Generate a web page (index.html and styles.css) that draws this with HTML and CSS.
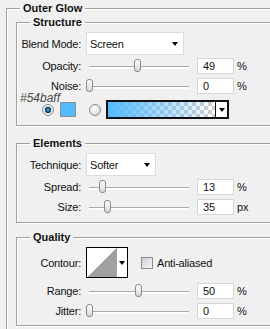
FILE: index.html
```html
<!DOCTYPE html>
<html lang="en">
<head>
    <meta charset="UTF-8">
    <meta name="viewport" content="width=device-width, initial-scale=1.0">
    <title>Outer Glow</title>
    <link rel="stylesheet" href="styles.css">
</head>
<body>
    <fieldset class="panel">
        <legend>Outer Glow</legend>

        <fieldset class="group structure">
            <legend>Structure</legend>
            <div class="row tall">
                <span class="label">Blend Mode:</span>
                <div class="select blend"><span>Screen</span><i class="arrow"></i></div>
            </div>
            <div class="row first">
                <span class="label">Opacity:</span>
                <div class="slider"><span class="thumb" style="left: 48px"></span></div>
                <span class="field">49</span>
                <span class="unit">%</span>
            </div>
            <div class="row">
                <span class="label">Noise:</span>
                <div class="slider"><span class="thumb" style="left: 0px"></span></div>
                <span class="field">0</span>
                <span class="unit">%</span>
            </div>
            <div class="hex">#54baff</div>
            <div class="colors">
                <span class="radio on"></span>
                <span class="swatch"></span>
                <span class="radio"></span>
                <div class="gradient">
                    <span class="ramp"></span>
                    <span class="drop"><i class="arrow"></i></span>
                </div>
            </div>
        </fieldset>

        <fieldset class="group elements">
            <legend>Elements</legend>
            <div class="row tall">
                <span class="label">Technique:</span>
                <div class="select technique"><span>Softer</span><i class="arrow"></i></div>
            </div>
            <div class="row first">
                <span class="label">Spread:</span>
                <div class="slider"><span class="thumb" style="left: 13px"></span></div>
                <span class="field">13</span>
                <span class="unit">%</span>
            </div>
            <div class="row">
                <span class="label">Size:</span>
                <div class="slider"><span class="thumb" style="left: 18px"></span></div>
                <span class="field">35</span>
                <span class="unit">px</span>
            </div>
        </fieldset>

        <fieldset class="group quality">
            <legend>Quality</legend>
            <div class="row contour-row">
                <span class="label">Contour:</span>
                <div class="contour">
                    <span class="curve"></span>
                    <span class="contour-drop"><i class="arrow"></i></span>
                </div>
                <span class="check"></span>
                <span>Anti-aliased</span>
            </div>
            <div class="row range">
                <span class="label">Range:</span>
                <div class="slider"><span class="thumb" style="left: 49px"></span></div>
                <span class="field">50</span>
                <span class="unit">%</span>
            </div>
            <div class="row">
                <span class="label">Jitter:</span>
                <div class="slider"><span class="thumb" style="left: 0px"></span></div>
                <span class="field">0</span>
                <span class="unit">%</span>
            </div>
        </fieldset>
    </fieldset>
</body>
</html>
```

FILE: styles.css
```css
* { margin: 0; padding: 0; box-sizing: border-box; }
html, body { overflow: hidden; }
body { font-family: "Liberation Sans", Arial, sans-serif; font-size: 11px; letter-spacing: -0.2px; color: #111; background: #f0f0f0; padding-top: 2px; }

fieldset { border: 1px solid #a0a0a0; box-shadow: inset 1px 1px 0 #fff, 0 1px 0 #fff; min-width: 0; }
legend { font-weight: bold; line-height: 13px; padding: 0 3px; letter-spacing: 0; }

.panel { width: 300px; margin-left: 6px; padding: 1px 0 12px 9px; }
.panel > legend { margin-left: 4px; }
.group legend { margin-left: 13px; }
.group { padding: 3px 0 6px; }
.elements { margin-top: 11px; padding-bottom: 7px; }
.quality { margin-top: 8px; }

.row { display: flex; align-items: center; height: 16px; margin-top: 4px; }
.row.tall { height: 23px; margin-top: 0; }
.row.first { margin-top: 3px; }
.label { width: 64px; text-align: right; margin-right: 5px; line-height: 10px; flex-shrink: 0; }

.select { display: flex; align-items: center; justify-content: space-between; height: 23px; border: 1px solid #dcdcdc; background: #fff; padding: 0 5px 0 3px; font-size: 11px; }
.blend { width: 98px; }
.technique { width: 70px; }
.arrow { display: block; width: 0; height: 0; border-top: 4px solid #000; border-left: 3px solid transparent; border-right: 3px solid transparent; }

.slider { position: relative; width: 107px; height: 16px; flex-shrink: 0; }
.slider::before { content: ""; position: absolute; left: 3px; right: 4px; top: 8px; height: 2px; border-top: 1px solid #a9a9a9; background: #fdfdfd; }
.thumb { position: absolute; top: 1px; width: 7px; height: 13px; border: 1px solid #8a8a8a; border-radius: 3px; background: linear-gradient(#fff, #d6d6d6); }

.field { width: 37px; height: 16px; margin-left: 4px; border: 1px solid #d6d6d6; background: #fff; padding-left: 5px; line-height: 14px; flex-shrink: 0; }
.unit { margin-left: 3px; }

.hex { font-style: italic; font-size: 12px; color: #4a4a4a; height: 8px; line-height: 8px; padding-left: 3px; letter-spacing: 0; }

.colors { display: flex; align-items: center; height: 19px; margin-top: -2px; }
.radio { width: 12px; height: 12px; border-radius: 50%; border: 1px solid #8c8c8c; background: radial-gradient(circle at 40% 35%, #fff, #cfcfcf); margin-left: 13px; flex-shrink: 0; }
.radio.on { margin-left: 25px; background: radial-gradient(circle, #6cc0f0 0, #1d6aa3 1.5px, #0b3a63 3px, #f6f6f6 3.6px, #d8d8d8 6px); }
.swatch { width: 16px; height: 15px; border: 1px solid #8d8d8d; background: #54baff; margin-left: 6px; flex-shrink: 0; }
.gradient { display: flex; width: 123px; height: 19px; border: 2px solid #111; background: #fff; margin-left: 5px; flex-shrink: 0; }
.ramp { flex: 1; background: linear-gradient(to right, #54baff, rgba(84, 186, 255, 0)), repeating-conic-gradient(#cfcfcf 0 25%, #fff 0 50%) 0 0 / 8px 8px; }
.drop { width: 12px; border-left: 1px solid #111; display: flex; align-items: center; justify-content: center; }

.contour-row { height: 31px; margin-top: 0; }
.contour { display: flex; width: 42px; height: 31px; border: 1px solid #000; background: #fff; flex-shrink: 0; }
.curve { width: 30px; background: linear-gradient(to top left, #a0a0a0 50%, #fff 50%); }
.contour-drop { flex: 1; display: flex; align-items: center; justify-content: center; }
.check { width: 12px; height: 12px; border: 1px solid #8e8e8e; background: linear-gradient(135deg, #cfcfcf, #f6f6f6); margin: 0 4px 0 13px; flex-shrink: 0; }
.row.range { margin-top: 5px; }
```
